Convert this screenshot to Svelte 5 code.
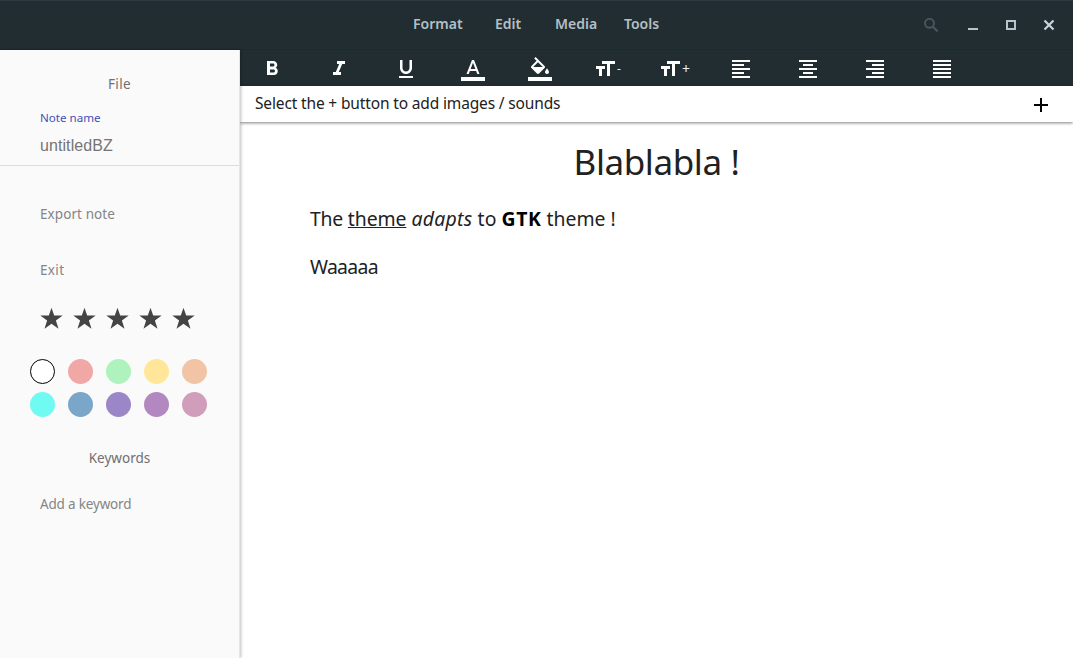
<script>
  const menus = [
    { label: 'Format', width: 82 },
    { label: 'Edit', width: 60 },
    { label: 'Media', width: 69 },
    { label: 'Tools', width: 40 },
  ];

  const tools = [
    { name: 'bold', d: 'M15.6 10.79c.97-.67 1.65-1.77 1.65-2.79 0-2.26-1.75-4-4-4H7v14h7.04c2.09 0 3.71-1.7 3.71-3.79 0-1.52-.86-2.82-2.15-3.42zM10 6.5h3c.83 0 1.5.67 1.5 1.5s-.67 1.5-1.5 1.5h-3v-3zm3.5 9H10v-3h3.5c.83 0 1.5.67 1.5 1.5s-.67 1.5-1.5 1.5z' },
    { name: 'italic', d: 'M10 4v3h2.21l-3.42 8H6v3h8v-3h-2.21l3.42-8H18V4z' },
    { name: 'underline', d: 'M12 17c3.31 0 6-2.69 6-6V3h-2.5v8c0 1.93-1.57 3.5-3.5 3.5S8.5 12.93 8.5 11V3H6v8c0 3.31 2.69 6 6 6zm-7 2v2h14v-2H5z' },
    { name: 'color', d: 'M0 20h24v4H0zM11 3L5.5 17h2.25l1.12-3h6.25l1.12 3h2.25L13 3h-2zm-1.38 9L12 5.67 14.38 12H9.62z' },
    { name: 'fill', d: 'M16.56 8.94L7.62 0 6.21 1.41l2.38 2.38-5.15 5.15c-.59.59-.59 1.54 0 2.12l5.5 5.5c.29.29.68.44 1.06.44s.77-.15 1.06-.44l5.5-5.5c.59-.58.59-1.53 0-2.12zM5.21 10L10 5.21 14.79 10H5.21zM19 11.500s-2 2.170-2 3.500c0 1.100.9 2 2 2s2-.9 2-2c0-1.330-2-3.500-2-3.500zM0 20h24v4H0z' },
    { name: 'smaller', sign: '-', d: 'M9 4v3h5v12h3V7h5V4H9zm-6 8h3v7h3v-7h3V9H3v3z' },
    { name: 'larger', sign: '+', d: 'M9 4v3h5v12h3V7h5V4H9zm-6 8h3v7h3v-7h3V9H3v3z' },
    { name: 'left', d: 'M15 15H3v2h12v-2zm0-8H3v2h12V7zM3 13h18v-2H3v2zm0 8h18v-2H3v2zM3 3v2h18V3H3z' },
    { name: 'center', d: 'M7 15v2h10v-2H7zm-4 6h18v-2H3v2zm0-8h18v-2H3v2zm4-6v2h10V7H7zM3 3v2h18V3H3z' },
    { name: 'right', d: 'M3 21h18v-2H3v2zm6-4h12v-2H9v2zm-6-4h18v-2H3v2zm6-4h12V7H9v2zM3 3v2h18V3H3z' },
    { name: 'justify', d: 'M3 21h18v-2H3v2zm0-4h18v-2H3v2zm0-4h18v-2H3v2zm0-4h18V7H3v2zm0-6v2h18V3H3z' },
  ];

  const colors = ['#ffffff', '#f1a7a6', '#aef3bd', '#ffe699', '#f1c4a5', '#6ffaf2', '#7aa6ca', '#9b86c8', '#b388c1', '#d09dba'];
</script>

<div class="window">
  <header>
    <nav>
      {#each menus as m}
        <span style="width: {m.width}px">{m.label}</span>
      {/each}
    </nav>
    <svg class="controls" width="150" height="50" viewBox="0 0 150 50" fill="none">
      <g stroke="#49555b" stroke-width="2"><circle cx="6.5" cy="23.300" r="4.500" /><path d="M9.700 26.500l4.900 4.900" stroke-width="2.200" /></g>
      <path d="M45 28h10v2H45z" fill="#b7c5cb" />
      <path d="M84 21h8v8h-8z" stroke="#b7c5cb" stroke-width="2" />
      <path d="M121.500 20.500l9 9m0-9l-9 9" stroke="#c8d4d9" stroke-width="2.200" />
    </svg>
  </header>

  <div class="body">
    <aside>
      <h2 class="file">File</h2>
      <div class="note">Note name</div>
      <div class="input">untitledBZ</div>
      <div class="item export">Export note</div>
      <div class="item exit">Exit</div>
      <div class="stars">
        {#each Array(5) as _}
          <svg width="23" height="22" viewBox="0 0.500 23 22" fill="#444"><path d="M11.500 0.300L14.200 8H22.700L15.900 13.100L18.500 21.200L11.500 16.200L4.500 21.200L7.100 13.100L.3 8H8.800z" /></svg>
        {/each}
      </div>
      <div class="colors">
        {#each colors as c, i}
          <i class:selected={i === 0} style="background: {c}"></i>
        {/each}
      </div>
      <h2 class="keywords">Keywords</h2>
      <div class="item add">Add a keyword</div>
    </aside>

    <main>
      <div class="toolbar">
        {#each tools as t}
          <div class="tool {t.name}">
            <svg width="24" height="24" viewBox="0 0 24 24" fill="#fff"><path d={t.d} /></svg>
            {#if t.sign}<b>{t.sign}</b>{/if}
          </div>
        {/each}
      </div>
      <div class="attachments">
        <span>Select the + button to add images / sounds</span>
        <svg width="24" height="24" viewBox="0 0 24 24"><path d="M19 13h-6v6h-2v-6H5v-2h6V5h2v6h6v2z" /></svg>
      </div>
      <article>
        <h1>Blablabla !</h1>
        <p><span class="the">The</span> <u>theme</u> <em>adapts</em> <span class="to">to</span> <strong>GTK</strong> theme !</p>
        <p class="second">Waaaaa</p>
      </article>
    </main>
  </div>
</div>

<style>
  :global(body) { background: #fff; overflow: hidden; }
  .window { width: 1073px; height: 658px; display: flex; flex-direction: column; font-family: "Noto Sans", sans-serif; color: #212121; overflow: hidden; white-space: nowrap; }
  header { box-sizing: border-box; height: 50px; flex: none; display: flex; justify-content: space-between; background: #222d32; box-shadow: inset 0 1px #2d3b41, inset 0 -1px #1f292d; }
  nav { display: flex; padding-left: 413px; font-size: 14px; font-weight: 600; line-height: 48px; color: #b3c0c6; }
  .body { flex: 1; display: flex; min-height: 0; }
  aside { box-sizing: border-box; width: 240px; flex: none; background: #fafafa; border-right: 1px solid #e6e6e6; box-shadow: 1px 0 3px rgba(0, 0, 0, .25); z-index: 1; font-size: 13.500px; color: #757575; }
  h2 { margin: 0; font-size: 13.500px; font-weight: 400; text-align: center; line-height: 20px; color: #6f6f6f; }
  .file { padding-top: 24px; letter-spacing: .4px; }
  .note { margin: 14px 0 0 40px; font-size: 11.600px; line-height: 20px; color: #3f51b5; }
  .input { padding: 7px 0 9px 40px; font: 16px/21px "Liberation Sans", sans-serif; letter-spacing: .08px; color: #757575; border-bottom: 1px solid #dcdcdc; }
  .item { padding-left: 40px; line-height: 56px; height: 56px; color: #858585; }
  .export { margin-top: 20px; letter-spacing: .08px; }
  .exit { letter-spacing: .35px; }
  .stars { display: flex; gap: 10px; padding: 10px 0 0 40px; height: 22px; }
  .colors { display: grid; grid-template-columns: repeat(5, 25px); gap: 8px 13px; padding: 29px 0 0 30px; }
  .colors i { width: 25px; height: 25px; border-radius: 50%; box-sizing: border-box; }
  .colors .selected { border: 1px solid #000; }
  .keywords { margin-top: 31px; }
  .add { margin-top: 8px; letter-spacing: -.18px; }
  main { flex: 1; min-width: 0; background: #fff; }
  .toolbar { height: 36px; background: #222d32; display: flex; gap: 43px; padding-left: 20px; box-sizing: border-box; padding-top: 7px; }
  .tool { width: 24px; display: flex; justify-content: center; }
  .tool svg { flex: none; display: block; }
  .tool b { font-size: 12px; font-weight: 400; line-height: 23px; color: #eee; }
  .larger b { font-size: 14px; }
  .attachments { height: 36px; display: flex; justify-content: space-between; padding: 0 20px 0 15px; font-size: 15.500px; letter-spacing: -.15px; line-height: 34px; box-shadow: 0 1px 3px rgba(0, 0, 0, .5); }
  .attachments svg { margin-top: 7px; }
  article { padding: 16px 70px; font-size: 19.400px; }
  h1 { margin: 0; text-align: center; font-size: 35px; font-weight: 400; letter-spacing: -.4px; line-height: 48px; }
  p { margin: 19px 0 0; line-height: 28px; }
  .the { letter-spacing: -.3px; }
  u { letter-spacing: -.1px; }
  em { letter-spacing: .3px; }
  .to { letter-spacing: .1px; }
  .second { margin-top: 20px; letter-spacing: -.7px; }
  strong { color: #000; letter-spacing: .6px; }
</style>
